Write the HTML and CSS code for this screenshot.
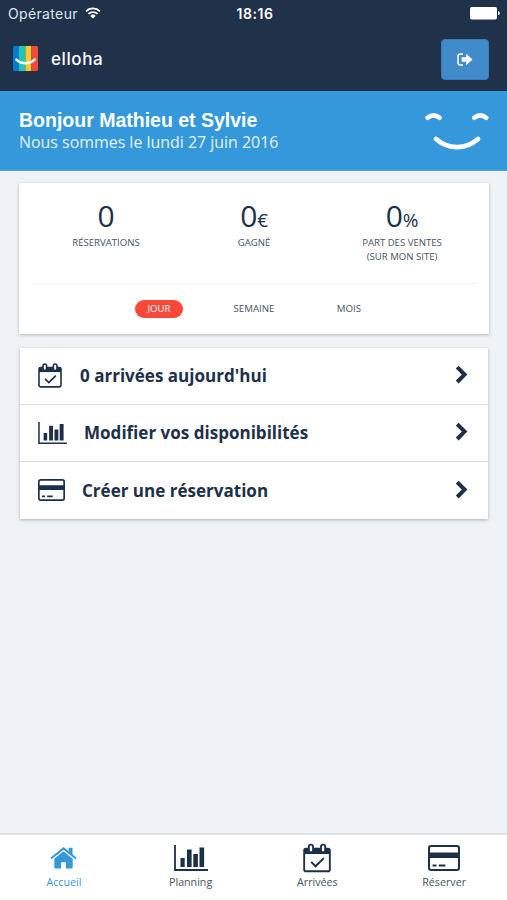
FILE: index.html
```html
<!DOCTYPE html>
<html lang="fr">
<head>
<meta charset="utf-8">
<title>elloha</title>
<link rel="stylesheet" href="styles.css">
</head>
<body>
<svg class="defs" aria-hidden="true">
  <symbol id="calendar" viewBox="0 0 24 25">
    <rect x="1" y="4.5" width="22" height="19.4" rx="1.6" fill="none" stroke="currentColor" stroke-width="1.6"/>
    <path d="M1 4.5h22v4.6H1z" fill="currentColor"/>
    <rect x="5" y="1" width="3.6" height="6.6" rx="1.8" fill="#fff" stroke="currentColor" stroke-width="1.6"/>
    <rect x="15.4" y="1" width="3.6" height="6.6" rx="1.8" fill="#fff" stroke="currentColor" stroke-width="1.6"/>
    <path d="M7 15.8l3.8 3.8 7-7" fill="none" stroke="currentColor" stroke-width="1.7"/>
  </symbol>
  <symbol id="chart" viewBox="0 0 34 26">
    <path d="M1 0v25h33" fill="none" stroke="currentColor" stroke-width="1.8"/>
    <path d="M6.500 13h4.200v9H6.500zM13 4.500h4.600V22H13zM19.300 9h4.600v13h-4.600zM25.500 2.500h4.600V22h-4.600z" fill="currentColor"/>
  </symbol>
  <symbol id="card" viewBox="0 0 32 26">
    <rect x="1" y="1" width="30" height="24" rx="2.2" fill="none" stroke="currentColor" stroke-width="2"/>
    <path d="M1 7.500h30v5.600H1zM4.600 19.400h3.800v2.200H4.600zM10.800 19.400h6.600v2.200h-6.600z" fill="currentColor"/>
  </symbol>
  <symbol id="chevron" viewBox="0 0 13 20">
    <path d="M2.200 2.200L9.600 9.600 2.200 17" fill="none" stroke="currentColor" stroke-width="4"/>
  </symbol>
</svg>
<div class="app">
  <header class="top">
    <div class="status">
      <div class="carrier"><span>Opérateur</span>
        <svg class="wifi" viewBox="0 0 16 12"><g fill="none" stroke="currentColor" stroke-width="1.7"><path d="M1 4.3a10 10 0 0 1 14 0"/><path d="M3.4 6.900a6.600 6.600 0 0 1 9.200 0"/></g><path d="M8 11.600L5.300 8.900a3.900 3.900 0 0 1 5.400 0z" fill="currentColor"/></svg>
      </div>
      <span class="clock">18:16</span>
      <svg class="battery" viewBox="0 0 30 13"><rect width="27" height="12.500" rx="1.800" fill="#fff"/><path d="M28 4.300q1.800 0 1.800 2t-1.800 2z" fill="#fff"/></svg>
    </div>
    <div class="bar">
      <svg class="logo" viewBox="0 0 25 25"><path d="M1.500 0H6v25H1.500Q0 25 0 23.500V1.500Q0 0 1.500 0z" fill="#087bce"/><path d="M6 0h6.400v25H6z" fill="#22c4bd"/><path d="M12.400 0h6v25h-6z" fill="#fcc832"/><path d="M18.400 0h5.100Q25 0 25 1.500v22q0 1.500-1.500 1.500h-5.100z" fill="#f04b38"/><path d="M3.400 13.600c5 4.700 13.200 4.700 18.200 0" fill="none" stroke="#fff" stroke-width="2.600" stroke-linecap="round"/></svg>
      <span class="brand">elloha</span>
      <button class="logout" aria-label="Déconnexion"><svg viewBox="0 0 16 13"><path d="M6 1H3.500Q1 1 1 3.500v6Q1 12 3.500 12H6" fill="none" stroke="#fff" stroke-width="1.500"/><path d="M4.600 4.300h4.600V.8L15.500 6.500 9.200 12.200V8.700H4.600z" fill="#fff"/></svg></button>
    </div>
  </header>
  <section class="hello">
    <div>
      <h1>Bonjour Mathieu et Sylvie</h1>
      <p>Nous sommes le lundi 27 juin 2016</p>
    </div>
    <svg class="smile" viewBox="0 0 64 38"><g fill="none" stroke="#fff" stroke-width="4.600" stroke-linecap="round"><path d="M2.600 5.800Q8.600 .8 14.500 5.800"/><path d="M49.300 5.800Q55.200 .8 61.200 5.800"/><path stroke-width="4.800" d="M11 27c12.500 10.800 29.500 10.800 42 0"/></g></svg>
  </section>
  <main>
    <section class="stats">
      <div class="figures">
        <div class="fig"><div class="num">0</div><div class="lbl">RÉSERVATIONS</div></div>
        <div class="fig"><div class="num">0<small>€</small></div><div class="lbl">GAGNÉ</div></div>
        <div class="fig"><div class="num">0<small>%</small></div><div class="lbl">PART DES VENTES<br>(SUR MON SITE)</div></div>
      </div>
      <div class="periods">
        <div><span class="on">JOUR</span></div><div><span>SEMAINE</span></div><div><span>MOIS</span></div>
      </div>
    </section>
    <nav class="list">
      <a class="row"><svg class="i-cal"><use href="#calendar"/></svg><span>0 arrivées aujourd'hui</span><svg class="chev"><use href="#chevron"/></svg></a>
      <a class="row"><svg class="i-chart"><use href="#chart"/></svg><span>Modifier vos disponibilités</span><svg class="chev"><use href="#chevron"/></svg></a>
      <a class="row"><svg class="i-card"><use href="#card"/></svg><span>Créer une réservation</span><svg class="chev"><use href="#chevron"/></svg></a>
    </nav>
  </main>
  <nav class="tabs">
    <a class="tab active"><span class="ic"><svg class="home" viewBox="0 0 27 22"><path d="M1 11.500L13.500 1.400 26 11.500" fill="none" stroke="currentColor" stroke-width="2"/><path d="M18.700 .8h3.800v7.600l-3.800-3.200z" fill="currentColor"/><path d="M4.300 11.700l9.200-7.400 9.200 7.400V20q0 1.500-1.500 1.500h-5.300v-6.200h-4.800v6.200H5.800Q4.300 21.500 4.300 20z" fill="currentColor"/></svg></span>Accueil</a>
    <a class="tab"><span class="ic"><svg class="b-chart"><use href="#chart"/></svg></span>Planning</a>
    <a class="tab"><span class="ic"><svg class="b-cal"><use href="#calendar"/></svg></span>Arrivées</a>
    <a class="tab"><span class="ic"><svg class="b-card"><use href="#card"/></svg></span>Réserver</a>
  </nav>
</div>
</body>
</html>
```
FILE: styles.css
```css
* { box-sizing: border-box; }
body { margin: 0; font-family: "Open Sans", sans-serif; color: #1d3049; background: #eff3f6; }
svg { display: block; flex: none; }
.defs { display: none; }
.app { height: 900px; display: flex; flex-direction: column; }
.top { height: 91px; background: #20324a; border-bottom: 1px solid #14304f; color: #fff; }
.status { height: 27px; display: grid; grid-template-columns: 1fr auto 1fr; align-items: center; padding: 0 5px 0 8px; font-family: Inter, sans-serif; font-size: 14px; }
.carrier { display: flex; align-items: center; gap: 7px; color: #dce6f0; letter-spacing: .35px; }
.wifi { width: 16px; height: 12px; color: #fff; margin-top: -1px; }
.clock { font-weight: 600; letter-spacing: .6px; }
.battery { width: 30px; height: 13px; justify-self: end; margin-right: 2px; }
.bar { height: 63px; display: flex; align-items: center; padding: 0 18px 0 13px; }
.logo { width: 25px; height: 25px; }
.brand { font-family: Inter, sans-serif; font-weight: 500; font-size: 17px; letter-spacing: .6px; margin-left: 13px; }
.logout { margin: 2px 0 0 auto; width: 48px; height: 41px; padding: 0; border: 1px solid #357ebd; border-radius: 4px; background: #428bca; display: flex; align-items: center; justify-content: center; }
.logout svg { width: 16px; height: 13px; }
.hello { height: 80px; background: #3498db; border-bottom: 1px solid #58a6da; color: #fff; display: flex; justify-content: space-between; padding: 18px 18px 0 19px; }
.hello h1 { margin: 0; font: bold 19.500px/22px "Liberation Sans", sans-serif; }
.hello p { margin: 0; font-size: 15.930px; line-height: 22px; color: #e6f3fc; }
.smile { width: 64px; height: 38px; margin-top: 3px; }
main { flex: 1; padding: 12px 18px 0 19px; }
.stats { height: 151px; background: #fff; box-shadow: 0 1px 3px rgba(60,75,90,.35); margin-bottom: 14px; padding: 0 12px; }
.figures { height: 101px; border-bottom: 1px solid #f3f4f5; display: grid; grid-template-columns: repeat(3, 148px); padding: 17px 0 0 1px; text-align: center; }
.num { font-size: 30px; line-height: 32px; height: 34px; letter-spacing: -.3px; }
.num small { font-size: 19px; line-height: 1; }
.lbl { font-size: 9.600px; line-height: 13.500px; margin-top: 2px; color: #485363; }
.periods { display: grid; grid-template-columns: repeat(3, 95px); justify-content: center; padding-top: 16px; text-align: center; font-size: 9.700px; color: #485363; }
.periods span { display: inline-block; line-height: 18px; }
.periods .on { background: #f9483a; color: #fff; border-radius: 9px; width: 48px; }
.list { margin: 0 1px; height: 171px; background: #fff; box-shadow: 0 1px 3px rgba(60,75,90,.4); display: grid; grid-template-rows: 56px 57px 58px; }
.row { display: flex; align-items: center; padding: 0 20px 1px 18px; font-size: 17.050px; font-weight: 700; }
.row + .row { border-top: 1px solid #dcdfe2; }
.i-cal { width: 24px; height: 25px; margin-right: 18px; }
.i-chart { width: 29px; height: 22px; margin-right: 17px; }
.i-card { width: 27px; height: 22px; margin-right: 17px; }
.chev { width: 13px; height: 20px; margin: -1px 0 0 auto; }
.tabs { height: 67px; background: #fff; border-top: 2px solid #dfe2e5; display: grid; grid-template-columns: repeat(4, 1fr); font-size: 10.700px; line-height: 14px; color: #485363; }
.tab { display: flex; flex-direction: column; align-items: center; padding: 6px 0 0 1px; }
.ic { height: 34px; display: flex; align-items: center; padding-bottom: 1px; color: #1d3049; }
.active, .active .ic { color: #3498db; }
.home { width: 27px; height: 22px; }
.b-chart { width: 34px; height: 26px; }
.b-cal { width: 28px; height: 30px; }
.b-card { width: 32px; height: 26px; }
```
